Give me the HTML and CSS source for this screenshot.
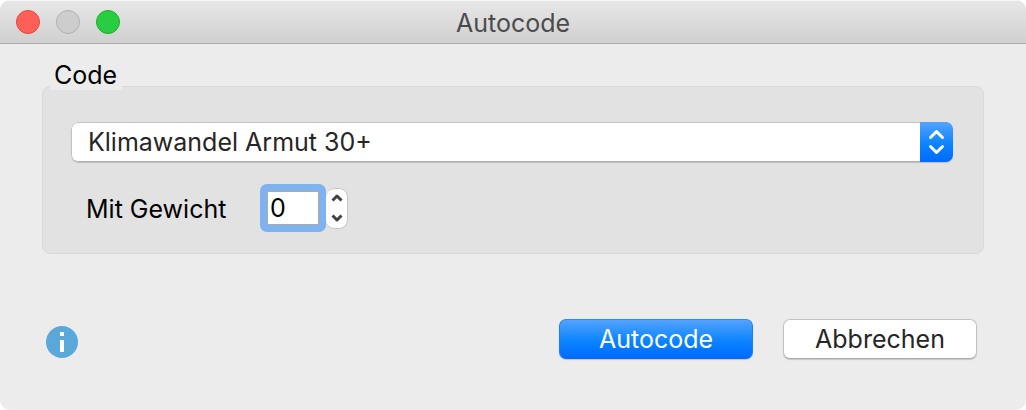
FILE: index.html
```html
<!DOCTYPE html>
<html lang="de">
<head>
    <meta charset="UTF-8">
    <meta name="viewport" content="width=device-width, initial-scale=1.0">
    <title>Autocode</title>
    <link rel="stylesheet" href="styles.css">
</head>
<body>
    <div class="window">
        <header class="titlebar">
            <div class="lights">
                <button type="button" class="light close" aria-label="Schließen"></button>
                <button type="button" class="light minimize" aria-label="Minimieren" disabled></button>
                <button type="button" class="light maximize" aria-label="Maximieren"></button>
            </div>
            <h1>Autocode</h1>
        </header>

        <form class="dialog">
            <fieldset>
                <legend>Code</legend>
                <div class="group">
                    <div class="select">
                        <select id="code" aria-label="Code">
                            <option selected>Klimawandel Armut 30+</option>
                        </select>
                        <svg class="arrows" viewBox="0 0 33 40" aria-hidden="true">
                            <path d="M10.5 15.5L16.5 9.5L22.5 15.5M10.5 24.5L16.5 30.5L22.5 24.5"/>
                        </svg>
                    </div>
                    <div class="weight">
                        <label for="weight">Mit Gewicht</label>
                        <input type="number" id="weight" value="0">
                        <div class="stepper">
                            <button type="button" id="up" aria-label="Erhöhen">
                                <svg viewBox="0 0 12 8"><path d="M1.5 6.5L6 2L10.5 6.5"/></svg>
                            </button>
                            <button type="button" id="down" aria-label="Verringern">
                                <svg viewBox="0 0 12 8"><path d="M1.5 1.5L6 6L10.5 1.5"/></svg>
                            </button>
                        </div>
                    </div>
                </div>
            </fieldset>

            <div class="actions">
                <button type="button" class="info" aria-label="Info">
                    <svg viewBox="0 0 32 32">
                        <circle cx="16" cy="16" r="16" fill="#5aa7d9"/>
                        <path d="M14 6h4v4h-4zM14 14h4v12h-4z" fill="#fff"/>
                    </svg>
                </button>
                <button type="button" class="btn primary">Autocode</button>
                <button type="button" class="btn">Abbrechen</button>
            </div>
        </form>
    </div>

    <script>
        const weight = document.getElementById('weight');
        document.getElementById('up').onclick = () => weight.stepUp();
        document.getElementById('down').onclick = () => weight.stepDown();
    </script>
</body>
</html>
```
FILE: styles.css
```css
* {
    box-sizing: border-box;
}
body {
    margin: 0;
    background-color: #fff;
    color: #000;
    font-family: Inter, 'Liberation Sans', sans-serif;
    font-size: 25px;
    line-height: 30px;
}
button, input, select {
    font: inherit;
    margin: 0;
    padding: 0;
    border: none;
}
svg {
    display: block;
}
.window {
    min-height: 100vh;
    background-color: #ececec;
    border-radius: 10px;
    overflow: hidden;
}
.titlebar {
    display: grid;
    grid-template-columns: 1fr auto 1fr;
    align-items: center;
    height: 44px;
    padding: 0 16px;
    background: linear-gradient(#e7e7e7, #d0d0d0);
    border-top: 1px solid #f5f5f5;
    border-bottom: 1px solid #acacac;
}
.titlebar h1 {
    margin: 0;
    padding-top: 2px;
    font-size: 25px;
    font-weight: normal;
    color: #4b4b4b;
}
.lights {
    display: flex;
    gap: 16px;
}
.light {
    width: 24px;
    height: 24px;
    border: 1px solid;
    border-radius: 50%;
}
.close {
    background-color: #ff5f57;
    border-color: #e2463f;
}
.minimize {
    background-color: #cdcdcd;
    border-color: #b0b0b0;
}
.maximize {
    background-color: #28cd41;
    border-color: #1dad2b;
}
.dialog {
    padding: 16px 42px 0;
}
fieldset {
    min-width: 0;
    margin: 0;
    padding: 0;
    border: none;
}
legend {
    position: relative;
    margin: 0 0 -4px 8px;
    padding: 0 5px 0 4px;
    background-color: #ececec;
}
.group {
    padding: 35px 30px 21px 28px;
    background-color: #e2e2e2;
    border: 1px solid #d9d9d9;
    border-radius: 8px;
}
.select {
    display: flex;
    height: 40px;
    background-color: #fff;
    border-radius: 7px;
    box-shadow: 0 1px 1px #c0c0c0;
    overflow: hidden;
    position: relative;
}
.select select {
    width: 100%;
    padding: 0 44px 0 16px;
    appearance: none;
    background-color: #fff;
    border: 1px solid #c2c2c2;
    border-bottom-color: #adadad;
    border-radius: 7px;
    color: #262626;
    outline: none;
}
.arrows {
    position: absolute;
    right: 0;
    width: 33px;
    height: 40px;
    background: linear-gradient(#55a3ff, #0a84ff 55%, #006aff);
    pointer-events: none;
}
.arrows path {
    fill: none;
    stroke: #fff;
    stroke-width: 3;
    stroke-linecap: round;
    stroke-linejoin: round;
}
.weight {
    display: flex;
    align-items: center;
    margin-top: 22px;
    padding-left: 15px;
}
.weight label {
    width: 174px;
    padding-top: 2px;
}
.weight input {
    width: 66px;
    height: 48px;
    padding: 0 3px;
    border: 7px solid #7fb2f0;
    border-radius: 7px;
    background-color: #fff;
    box-shadow: inset 0 0 0 1px #b0aaa5;
    appearance: textfield;
    outline: none;
}
.weight input::-webkit-inner-spin-button {
    appearance: none;
    margin: 0;
}
.stepper {
    display: flex;
    flex-direction: column;
    width: 22px;
    height: 41px;
    background-color: #fff;
    border: 1px solid #c6c6c6;
    border-left: none;
    border-radius: 9px;
    overflow: hidden;
}
.stepper button {
    display: flex;
    flex: 1;
    align-items: center;
    justify-content: center;
    background: none;
}
.stepper svg {
    width: 12px;
    height: 8px;
}
.stepper path {
    fill: none;
    stroke: #404040;
    stroke-width: 3;
    stroke-linejoin: round;
}
.actions {
    display: flex;
    align-items: center;
    gap: 30px;
    padding: 65px 7px 50px 4px;
}
.info {
    width: 32px;
    height: 32px;
    margin: 6px auto 0 0;
    background: none;
}
.btn {
    width: 194px;
    height: 40px;
    background-color: #fff;
    border: 1px solid #c2c2c2;
    border-bottom-color: #adadad;
    border-radius: 7px;
    color: #262626;
    box-shadow: 0 1px 1px #c6c6c6;
}
.primary {
    background: linear-gradient(#55a3ff, #0a84ff 55%, #006aff);
    border-color: #2a8dff #1a7cfb #0b66ee;
    color: #fff;
}
```
